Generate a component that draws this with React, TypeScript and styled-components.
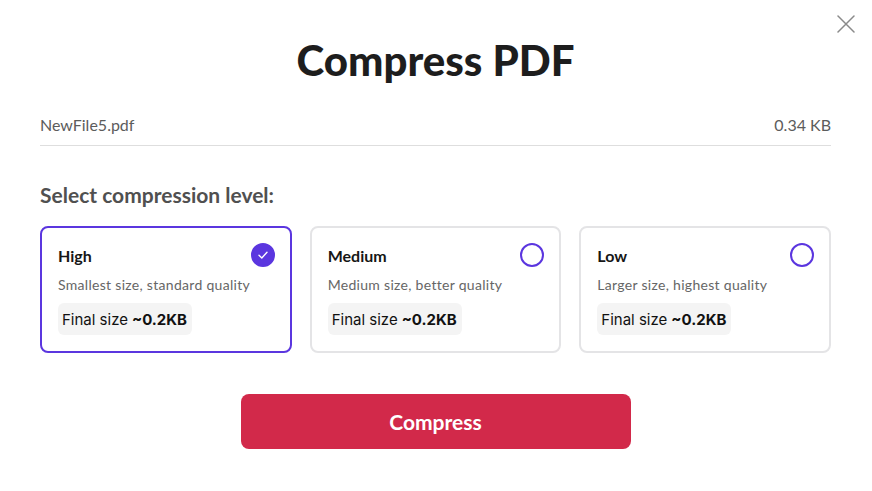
import styled, { createGlobalStyle } from 'styled-components';

const Global = createGlobalStyle`
  html, body {
    margin: 0;
    padding: 0;
    background: #fff;
  }
  body {
    font-family: Lato, "Noto Sans", sans-serif;
    color: #1c1c1c;
  }
  * { box-sizing: border-box; }
`;

const Modal = styled.div`
  position: relative;
  width: 872px;
  height: 491px;
  padding: 32px 41px 0 40px;
  background: #fff;
`;

const Close = styled.button`
  position: absolute;
  top: 15px;
  right: 17px;
  width: 18px;
  height: 18px;
  padding: 0;
  border: none;
  background: none;
  cursor: pointer;
`;

const Title = styled.h1`
  margin: 0;
  text-align: center;
  font-size: 42px;
  line-height: 56px;
  font-weight: 900;
  color: #1d1d1d;
`;

const FileRow = styled.div`
  display: flex;
  justify-content: space-between;
  align-items: center;
  margin-top: 26px;
  height: 32px;
  border-bottom: 1px solid #dedede;
  padding-bottom: 10px;
  font-size: 16px;
  color: #5c5c5c;
`;

const Label = styled.h2`
  margin: 36px 0 0;
  font-size: 21px;
  line-height: 26px;
  font-weight: 700;
  color: #505050;
`;

const Options = styled.div`
  display: grid;
  grid-template-columns: repeat(3, 1fr);
  gap: 18px;
  margin-top: 18px;
`;

const Card = styled.div<{ $active?: boolean }>`
  height: 127px;
  border: 2px solid ${p => (p.$active ? '#5b36df' : '#e4e4e6')};
  border-radius: 8px;
  padding: 15px 15px 15px 16px;
  display: flex;
  flex-direction: column;
  cursor: pointer;
`;

const CardHead = styled.div`
  display: flex;
  justify-content: space-between;
  align-items: center;
  height: 24px;
`;

const CardTitle = styled.span`
  font-size: 16px;
  font-weight: 700;
  color: #161616;
`;

const Radio = styled.span<{ $checked?: boolean }>`
  width: 24px;
  height: 24px;
  border-radius: 50%;
  border: 2px solid #5b36df;
  background: ${p => (p.$checked ? '#5b36df' : '#fff')};
  display: flex;
  align-items: center;
  justify-content: center;
`;

const Desc = styled.div`
  margin-top: 9px;
  font-size: 14px;
  letter-spacing: 0.3px;
  line-height: 18px;
  color: #666;
`;

const SizeBadge = styled.div`
  margin-top: 9px;
  align-self: flex-start;
  height: 32px;
  padding: 0 5px 0 4px;
  border-radius: 6px;
  background: #f4f4f4;
  display: flex;
  align-items: center;
  font-family: Inter, "Noto Sans", sans-serif;
  font-size: 15px;
  color: #111;

  b {
    font-weight: 700;
    margin-left: 4px;
  }
`;

const Actions = styled.div`
  display: flex;
  justify-content: center;
  margin-top: 41px;
`;

const CompressButton = styled.button`
  width: 390px;
  height: 55px;
  border: none;
  border-radius: 8px;
  background: #d2294a;
  color: #fff;
  font-family: Lato, "Noto Sans", sans-serif;
  font-size: 21px;
  font-weight: 700;
  cursor: pointer;
`;

const levels = [
  { name: 'High', desc: 'Smallest size, standard quality', active: true },
  { name: 'Medium', desc: 'Medium size, better quality', active: false },
  { name: 'Low', desc: 'Larger size, highest quality', active: false },
];

export default function App() {
  return (
    <>
      <Global />
      <Modal>
        <Close aria-label="Close">
          <svg width="18" height="18" viewBox="0 0 18 18">
            <path d="M1 1L17 17M17 1L1 17" stroke="#8a8a8a" strokeWidth="1.5" strokeLinecap="round" />
          </svg>
        </Close>
        <Title>Compress PDF</Title>
        <FileRow>
          <span>NewFile5.pdf</span>
          <span>0.34 KB</span>
        </FileRow>
        <Label>Select compression level:</Label>
        <Options>
          {levels.map(l => (
            <Card key={l.name} $active={l.active}>
              <CardHead>
                <CardTitle>{l.name}</CardTitle>
                <Radio $checked={l.active}>
                  {l.active && (
                    <svg width="12" height="12" viewBox="0 0 12 12">
                      <path d="M2 6.3L4.8 9L10 3.2" fill="none" stroke="#fff" strokeWidth="1.4" strokeLinecap="round" strokeLinejoin="round" />
                    </svg>
                  )}
                </Radio>
              </CardHead>
              <Desc>{l.desc}</Desc>
              <SizeBadge>
                Final size<b>~0.2KB</b>
              </SizeBadge>
            </Card>
          ))}
        </Options>
        <Actions>
          <CompressButton>Compress</CompressButton>
        </Actions>
      </Modal>
    </>
  );
}
